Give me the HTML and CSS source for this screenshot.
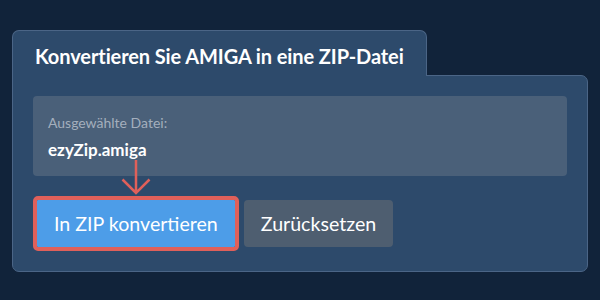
FILE: index.html
```html
<!DOCTYPE html>
<html lang="de">
<head>
    <meta charset="UTF-8">
    <meta name="viewport" content="width=device-width, initial-scale=1.0">
    <title>AMIGA in ZIP</title>
    <link rel="stylesheet" href="styles.css">
</head>
<body>

<div class="converter">
    <div class="tab">
        <h2 class="tab-title">Konvertieren Sie AMIGA in eine ZIP-Datei</h2>
    </div>
    <div class="panel">
        <div class="file-box">
            <div class="file-label">Ausgewählte Datei:</div>
            <div class="file-name">ezyZip.amiga</div>
        </div>
        <div class="actions">
            <svg class="arrow" width="30" height="37" viewBox="0 0 30 37">
                <path d="M15 1 V34 M1.5 20.5 L15 34 L28.5 20.5" fill="none" stroke="#e0605a" stroke-width="2.5"/>
            </svg>
            <button class="btn btn-convert">In ZIP konvertieren</button>
            <button class="btn btn-reset">Zurücksetzen</button>
        </div>
    </div>
</div>

</body>
</html>
```

FILE: styles.css
```css
body {
    margin: 0;
    background: #11233a;
    font-family: Lato, "Open Sans", sans-serif;
}
.converter {
    padding: 30px 12px 0 12px;
}
.tab {
    width: 415px;
    height: 46px;
    box-sizing: border-box;
    background: #2d4a6b;
    border: 1px solid #4b6586;
    border-bottom: none;
    border-radius: 7px 7px 0 0;
    padding-left: 22px;
    position: relative;
    z-index: 1;
}
.tab-title {
    margin: 0;
    color: #fff;
    font-size: 20px;
    font-weight: bold;
    line-height: 50px;
    letter-spacing: -0.1px;
}
.panel {
    width: 576px;
    box-sizing: border-box;
    background: #2d4a6b;
    border: 1px solid #4b6586;
    border-radius: 0 7px 7px 7px;
    margin-top: -1px;
    padding: 20px 20px 24px 20px;
}
.file-box {
    background: #4a6079;
    border-radius: 4px;
    padding: 18px 15px 16px 15px;
}
.file-label {
    color: #a4afbd;
    font-size: 14px;
    line-height: 17px;
    margin-bottom: 9px;
}
.file-name {
    color: #fff;
    font-size: 17px;
    line-height: 20px;
    font-weight: bold;
}
.actions {
    display: flex;
    align-items: center;
    gap: 9px;
    padding: 24px 0 0 4px;
    position: relative;
}
.arrow {
    position: absolute;
    left: 88px;
    top: -17px;
}
.btn {
    border: none;
    color: #fff;
    font-family: Lato, "Open Sans", sans-serif;
    font-size: 19.6px;
    height: 47px;
    padding: 0 17px;
    border-radius: 4px;
}
.btn-convert {
    background: #4d9de8;
    outline: 4px solid #e0605a;
    border-radius: 1px;
}
.btn-reset {
    background: #4e5e70;
}
```
